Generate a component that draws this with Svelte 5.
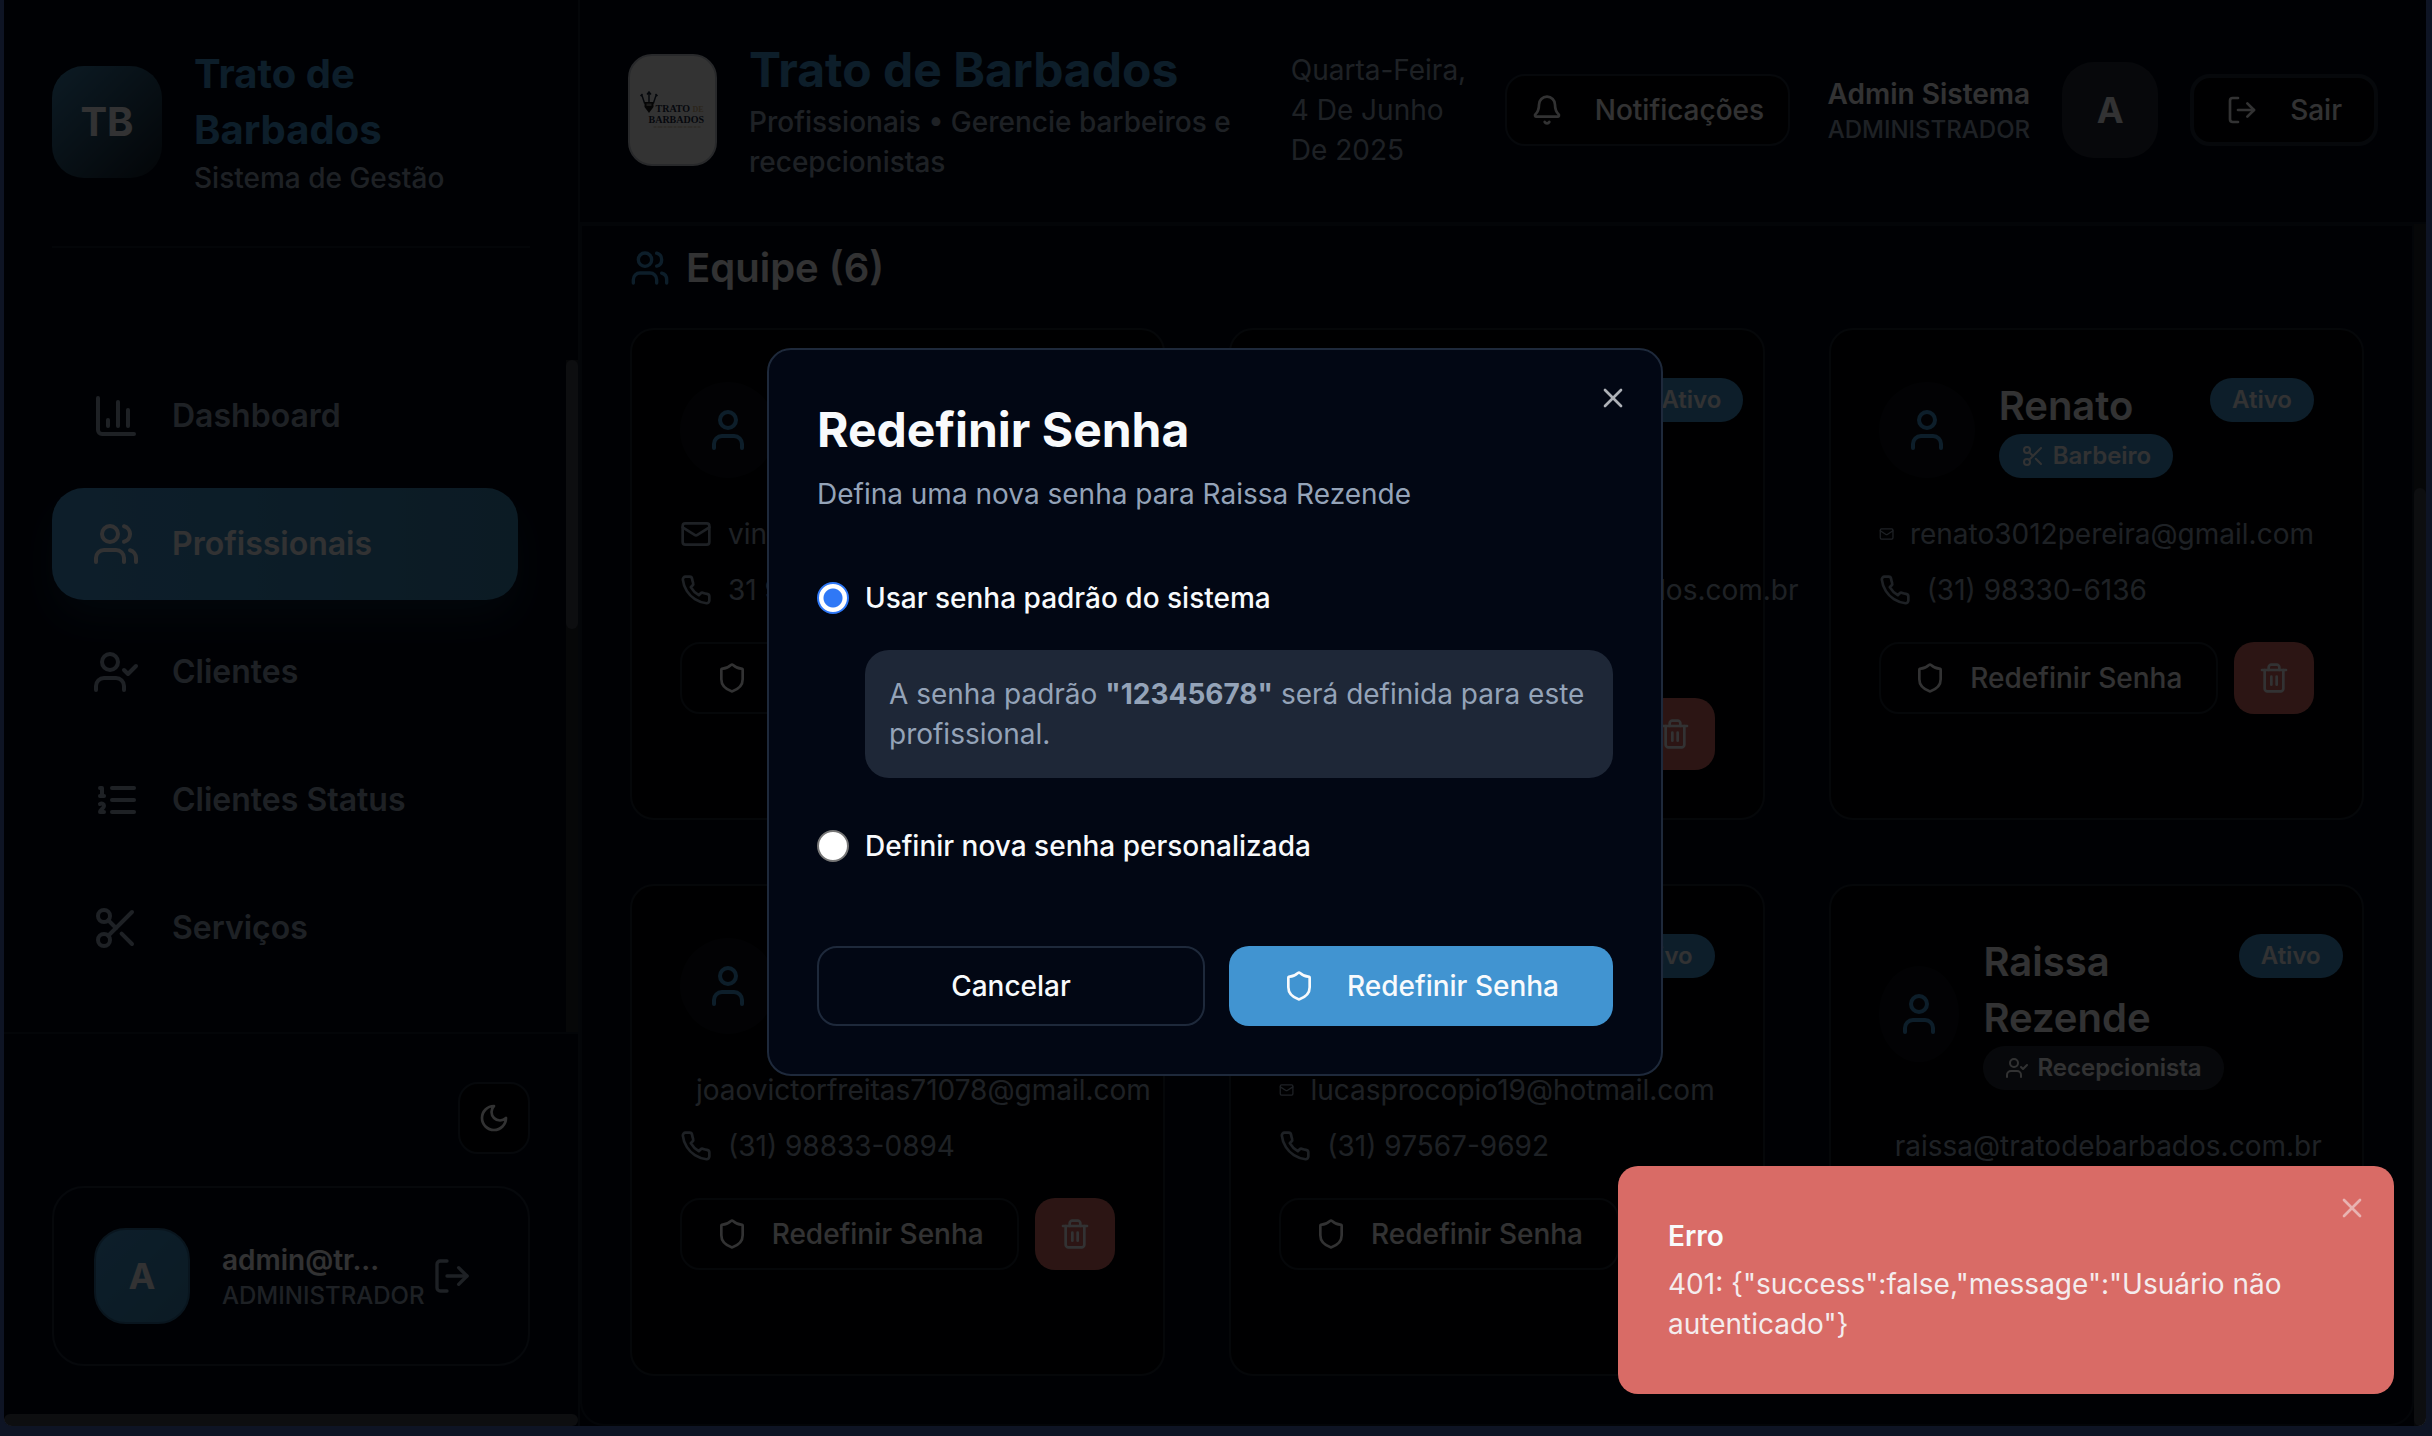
<script>
  const icons = {
    chart: ['M3 3v16a2 2 0 0 0 2 2h16', 'M18 17V9', 'M13 17V5', 'M8 17v-3'],
    users: ['M16 21v-2a4 4 0 0 0-4-4H6a4 4 0 0 0-4 4v2', 'M13 7a4 4 0 1 1-8 0a4 4 0 0 1 8 0', 'M22 21v-2a4 4 0 0 0-3-3.87', 'M16 3.13a4 4 0 0 1 0 7.75'],
    userCheck: ['M16 21v-2a4 4 0 0 0-4-4H6a4 4 0 0 0-4 4v2', 'M13 7a4 4 0 1 1-8 0a4 4 0 0 1 8 0', 'm16 11 2 2 4-4'],
    list: ['M10 12h11', 'M10 18h11', 'M10 6h11', 'M4 10h2', 'M4 6h1v4', 'M6 18H4c0-1 2-2 2-3s-1-1.5-2-1'],
    scissors: ['M9 6a3 3 0 1 1-6 0a3 3 0 0 1 6 0', 'M8.12 8.12 12 12', 'M20 4 8.12 15.88', 'M9 18a3 3 0 1 1-6 0a3 3 0 0 1 6 0', 'M14.8 14.8 20 20'],
    moon: ['M12 3a6 6 0 0 0 9 9 9 9 0 1 1-9-9Z'],
    logout: ['M9 21H5a2 2 0 0 1-2-2V5a2 2 0 0 1 2-2h4', 'm16 17 5-5-5-5', 'M21 12H9'],
    bell: ['M10.268 21a2 2 0 0 0 3.464 0', 'M3.262 15.326A1 1 0 0 0 4 17h16a1 1 0 0 0 .74-1.673C19.41 13.956 18 12.499 18 8A6 6 0 0 0 6 8c0 4.499-1.411 5.956-2.738 7.326'],
    user: ['M19 21v-2a4 4 0 0 0-4-4H9a4 4 0 0 0-4 4v2', 'M16 7a4 4 0 1 1-8 0a4 4 0 0 1 8 0'],
    mail: ['M4 4h16a2 2 0 0 1 2 2v12a2 2 0 0 1-2 2H4a2 2 0 0 1-2-2V6a2 2 0 0 1 2-2z', 'm22 7-8.97 5.7a1.94 1.94 0 0 1-2.06 0L2 7'],
    phone: ['M22 16.92v3a2 2 0 0 1-2.18 2 19.79 19.79 0 0 1-8.63-3.07 19.5 19.5 0 0 1-6-6 19.79 19.79 0 0 1-3.07-8.67A2 2 0 0 1 4.11 2h3a2 2 0 0 1 2 1.72 12.84 12.84 0 0 0 .7 2.81 2 2 0 0 1-.45 2.11L8.09 9.91a16 16 0 0 0 6 6l1.27-1.27a2 2 0 0 1 2.11-.45 12.84 12.84 0 0 0 2.81.7A2 2 0 0 1 22 16.92z'],
    shield: ['M20 13c0 5-3.5 7.5-7.66 8.95a1 1 0 0 1-.67-.01C7.5 20.5 4 18 4 13V6a1 1 0 0 1 1-1c2 0 4.5-1.2 6.24-2.72a1.17 1.17 0 0 1 1.52 0C14.51 3.81 17 5 19 5a1 1 0 0 1 1 1z'],
    trash: ['M3 6h18', 'M19 6v14c0 1-1 2-2 2H7c-1 0-2-1-2-2V6', 'M8 6V4c0-1 1-2 2-2h4c1 0 2 1 2 2v2', 'M10 11v6', 'M14 11v6'],
    close: ['M18 6 6 18', 'm6 6 12 12']
  };

  const nav = [
    { label: 'Dashboard', icon: 'chart' },
    { label: 'Profissionais', icon: 'users', active: true },
    { label: 'Clientes', icon: 'userCheck' },
    { label: 'Clientes Status', icon: 'list' },
    { label: 'Serviços', icon: 'scissors' }
  ];

  const team = [
    { name: 'Vinicius', role: 'Barbeiro', email: 'vinicius@gmail.com', phone: '31 99999-0000' },
    { name: 'Carlos Henrique', role: 'Recepcionista', email: 'carlos.pires@tratodebarbados.com.br', phone: '(31) 99999-0000' },
    { name: 'Renato', role: 'Barbeiro', email: 'renato3012pereira@gmail.com', phone: '(31) 98330-6136' },
    { name: 'João', role: 'Barbeiro', email: 'joaovictorfreitas71078@gmail.com', phone: '(31) 98833-0894' },
    { name: 'Lucas', role: 'Barbeiro', email: 'lucasprocopio19@hotmail.com', phone: '(31) 97567-9692' },
    { name: 'Raissa Rezende', role: 'Recepcionista', email: 'raissa@tratodebarbados.com.br', phone: '(31) 99999-0000' }
  ];

  let mode = $state('default');
  let modalOpen = $state(true);
  let toastOpen = $state(true);
</script>

{#snippet icon(name, size)}
  <svg class="icon {size}" viewBox="0 0 24 24" aria-hidden="true">
    {#each icons[name] as d}<path {d} />{/each}
  </svg>
{/snippet}

<div class="frame">
  <div class="app">
    <aside class="sidebar">
      <div class="brand">
        <div class="brand-mark">TB</div>
        <div>
          <p class="brand-name">Trato de Barbados</p>
          <p class="brand-sub">Sistema de Gestão</p>
        </div>
      </div>

      <div class="nav-area">
        <nav>
          {#each nav as item}
            <a href="#{item.icon}" class="nav-item" class:active={item.active}>
              {@render icon(item.icon, 'xl')}<span>{item.label}</span>
            </a>
          {/each}
        </nav>
        <div class="track"><div class="thumb nav-thumb"></div></div>
      </div>

      <div class="side-foot">
        <button class="theme" aria-label="Alternar tema">{@render icon('moon', 'md')}</button>
        <div class="account">
          <div class="avatar blue">A</div>
          <div class="account-text">
            <p class="strong">admin@tr...</p>
            <p class="role">ADMINISTRADOR</p>
          </div>
          <button class="ghost" aria-label="Sair da conta">{@render icon('logout', 'lg')}</button>
        </div>
      </div>
      <div class="side-scroll"></div>
    </aside>

    <div class="content">
      <header class="topbar">
        <div class="logo">
          <svg viewBox="0 0 84 108" role="img" aria-label="Trato de Barbados">
            <path d="M11 38l3 9h9l3-9M18.500 36v11M10 40l2-2M27 40l-2-2M16.500 38.500l2-2.500 2 2.500" fill="none" stroke="#1c2a3c" stroke-width="1.500" />
            <path d="M14 46h9v5l-4.500 6-4.500-6z" fill="#1c1c1c" />
            <path d="M16 47.500h5v2.500h-5z" fill="#8a8a88" />
            <text x="25" y="56" class="logo-text">TRATO</text>
            <text x="62" y="56" class="logo-text gold">DE</text>
            <text x="18" y="67" class="logo-text">BARBADOS</text>
            <path d="M23 71h47" stroke="#c9b48c" stroke-width="1.500" stroke-dasharray="3 1 5 1" opacity="0.600" />
          </svg>
        </div>
        <div class="headline">
          <h1>Trato de Barbados</h1>
          <p>Profissionais • Gerencie barbeiros e recepcionistas</p>
        </div>
        <p class="date">Quarta-Feira, 4 De Junho De 2025</p>
        <button class="btn notify">{@render icon('bell', 'md')}Notificações</button>
        <div class="who">
          <p class="strong">Admin Sistema</p>
          <p class="role">ADMINISTRADOR</p>
        </div>
        <div class="avatar">A</div>
        <button class="btn leave">{@render icon('logout', 'md')}Sair</button>
      </header>

      <div class="main-area">
        <main>
          <h2>{@render icon('users', 'lg')}Equipe (6)</h2>
          <div class="grid">
            {#each team as p}
              <article class="card">
                <div class="card-top">
                  <div class="person">
                    <div class="face">{@render icon('user', 'xl')}</div>
                    <div class="person-text">
                      <h3>{p.name}</h3>
                      <span class="badge" class:muted={p.role !== 'Barbeiro'}>
                        {@render icon(p.role === 'Barbeiro' ? 'scissors' : 'userCheck', 'sm')}{p.role}
                      </span>
                    </div>
                  </div>
                  <span class="badge">Ativo</span>
                </div>
                <div class="contacts">
                  <p>{@render icon('mail', 'md')}<span>{p.email}</span></p>
                  <p>{@render icon('phone', 'md')}<span>{p.phone}</span></p>
                </div>
                <div class="actions">
                  <button class="btn reset">{@render icon('shield', 'md')}Redefinir Senha</button>
                  <button class="btn delete" aria-label="Excluir {p.name}">{@render icon('trash', 'md')}</button>
                </div>
              </article>
            {/each}
          </div>
        </main>
        <div class="track"><div class="thumb main-thumb"></div></div>
      </div>
    </div>

    {#if modalOpen}
      <div class="overlay">
        <form class="modal" role="dialog" aria-labelledby="modal-title" onsubmit={(e) => e.preventDefault()}>
          <h2 id="modal-title">Redefinir Senha</h2>
          <p class="desc">Defina uma nova senha para Raissa Rezende</p>
          <label class="choice first">
            <input type="radio" name="mode" value="default" bind:group={mode} />
            Usar senha padrão do sistema
          </label>
          {#if mode === 'default'}
            <p class="note">A senha padrão <strong>"12345678"</strong> será definida para este profissional.</p>
          {/if}
          <label class="choice second">
            <input type="radio" name="mode" value="custom" bind:group={mode} />
            Definir nova senha personalizada
          </label>
          <div class="modal-actions">
            <button type="button" class="btn cancel" onclick={() => (modalOpen = false)}>Cancelar</button>
            <button type="submit" class="btn primary">{@render icon('shield', 'md')}Redefinir Senha</button>
          </div>
          <button type="button" class="close" aria-label="Fechar" onclick={() => (modalOpen = false)}>{@render icon('close', 'md')}</button>
        </form>
      </div>
    {/if}

    {#if toastOpen}
      <div class="toast" role="alert">
        <p class="toast-title">Erro</p>
        <p class="toast-body">401: &#123;"success":false,"message":"Usuário não autenticado"&#125;</p>
        <button class="toast-close" aria-label="Fechar aviso" onclick={() => (toastOpen = false)}>{@render icon('close', 'md')}</button>
      </div>
    {/if}
  </div>
</div>

<style>
  :global(body) { background: #0e1424; }
  :global(*), :global(*::before) { box-sizing: border-box; }
  .frame {
    --bg: #020817;
    --line: #1e293b;
    --soft: #161f2e;
    --muted: #94a3b8;
    --fg: #f8fafc;
    --blue: #4196d2;
    --red: #d96b66;
    height: 100vh;
    padding: 0 6px 10px 4px;
    font-family: Inter, sans-serif;
    font-size: 28px;
    line-height: 40px;
    color: var(--fg);
  }
  p, h1, h2, h3 { margin: 0; }
  button { font: inherit; color: inherit; background: none; border: 0; padding: 0; cursor: pointer; }
  .app { position: relative; display: flex; height: 100%; overflow: hidden; background: var(--bg); border-radius: 0 0 8px 8px; }

  .icon { fill: none; stroke: currentColor; stroke-width: 2; stroke-linecap: round; stroke-linejoin: round; flex: none; display: block; }
  .sm { width: 24px; height: 24px; }
  .md { width: 32px; height: 32px; }
  .lg { width: 40px; height: 40px; }
  .xl { width: 48px; height: 48px; }

  .sidebar { width: 576px; flex: none; display: flex; flex-direction: column; border-right: 2px solid var(--soft); }
  .brand { display: flex; align-items: center; gap: 32px; margin: 0 48px 112px; padding: 46px 0 48px; border-bottom: 2px solid #131c2b; }
  .brand-mark { width: 110px; height: 112px; flex: none; display: grid; place-items: center; border-radius: 32px; background: linear-gradient(135deg, #3f87b4, #101c28); font-size: 40px; font-weight: 700; }
  .brand-name { font-size: 40px; line-height: 56px; font-weight: 700; color: var(--blue); }
  .brand-sub { color: var(--muted); font-weight: 500; }

  .nav-area { flex: 1; min-height: 0; display: flex; overflow: hidden; }
  nav { flex: 1; display: flex; flex-direction: column; gap: 16px; padding: 0 48px; }
  .nav-item { flex: none; height: 112px; display: flex; align-items: center; gap: 32px; padding: 0 40px; border-radius: 32px; color: var(--muted); text-decoration: none; font-size: 32px; font-weight: 600; }
  .nav-item.active { color: var(--fg); background: linear-gradient(90deg, #4196d2, #3b86b4); box-shadow: 0 20px 40px -6px rgba(65, 150, 210, 0.2); }
  .track { width: 12px; flex: none; background: #1e232b; }
  .thumb { background: #41454f; border-radius: 6px; }
  .nav-thumb { height: 40%; }

  .side-foot { display: flex; flex-direction: column; align-items: flex-end; gap: 32px; padding: 48px; border-top: 2px solid #131c2b; }
  .theme { width: 72px; height: 72px; display: grid; place-items: center; border: 2px solid var(--line); border-radius: 20px; background: #030305; }
  .account { align-self: stretch; display: flex; align-items: center; gap: 32px; padding: 40px; border: 2px solid var(--line); border-radius: 32px; }
  .account-text { flex: 1; min-width: 0; white-space: nowrap; }
  .strong { font-weight: 600; }
  .role { font-size: 24px; line-height: 32px; font-weight: 500; color: var(--muted); }
  .ghost { padding: 16px; color: var(--muted); }
  .avatar { width: 96px; height: 96px; flex: none; display: grid; place-items: center; border-radius: 32px; background: #262c38; font-size: 36px; font-weight: 700; }
  .avatar.blue { background: linear-gradient(135deg, #4196d2, #3b86b4); border: 2px solid #2f6c98; }
  .side-scroll { height: 12px; flex: none; background: #41454f; border-radius: 6px; }

  .content { flex: 1; min-width: 0; display: flex; flex-direction: column; }
  .topbar { display: flex; align-items: center; gap: 32px; padding: 38px 48px 40px; border-bottom: 2px solid #131c2b; }
  .logo { width: 89px; height: 112px; flex: none; border: 2px solid #c8ccd4; border-radius: 24px; background: #fff; overflow: hidden; }
  .logo svg { display: block; width: 100%; height: 100%; }
  .logo-text { font-family: "Liberation Serif", serif; font-size: 10px; font-weight: 700; fill: #1c2c45; }
  .logo-text.gold { font-size: 8px; fill: #d8b98a; }
  .headline { flex: 1; min-width: 0; color: var(--muted); font-weight: 500; }
  h1 { font-size: 48px; line-height: 64px; font-weight: 700; color: var(--blue); }
  .date { width: 182px; flex: none; color: var(--muted); }
  .btn { display: flex; align-items: center; justify-content: center; gap: 32px; height: 72px; font-weight: 500; border-radius: 20px; white-space: nowrap; }
  .notify { padding: 0 24px; border: 2px solid var(--line); background: #030305; }
  .leave { padding: 0 32px; border: 4px solid var(--line); background: #030305; }
  .who { min-width: 208px; text-align: right; white-space: nowrap; }

  .main-area { flex: 1; min-height: 0; display: flex; }
  main { flex: 1; min-width: 0; padding: 14px 48px 48px; border: 2px solid #131c2b; border-radius: 0 0 24px 24px; overflow: hidden; }
  main h2 { display: flex; align-items: center; gap: 16px; margin-bottom: 32px; font-size: 40px; line-height: 56px; font-weight: 600; }
  main h2 :global(svg) { color: var(--blue); }
  .main-area .track { display: flex; flex-direction: column; justify-content: flex-end; }
  .main-thumb { height: 78%; }

  .grid { display: grid; grid-template-columns: repeat(3, minmax(0, 1fr)); gap: 64px; }
  .card { padding: 48px; border: 2px solid #1b2330; border-radius: 24px; background: #030305; }
  .card-top { display: flex; align-items: flex-start; justify-content: space-between; margin-bottom: 32px; }
  .person { display: flex; align-items: center; gap: 24px; min-width: min-content; }
  .face { width: 96px; height: 96px; min-width: 80px; display: grid; place-items: center; border-radius: 50%; background: #0b0e17; color: var(--blue); }
  .person-text { padding-bottom: 4px; min-width: min-content; }
  h3 { font-size: 40px; line-height: 56px; font-weight: 600; }
  .badge { display: flex; align-items: center; gap: 8px; width: max-content; height: 44px; flex: none; padding: 0 22px; border-radius: 22px; background: var(--blue); font-size: 24px; line-height: 32px; font-weight: 600; }
  .badge.muted { background: #262c38; }
  .contacts { display: flex; flex-direction: column; gap: 16px; margin-bottom: 32px; color: var(--muted); }
  .contacts p { display: flex; align-items: center; gap: 16px; white-space: nowrap; }
  .contacts :global(svg) { flex: 0 1 32px; min-width: 0; }
  .contacts span { flex: none; }
  .actions { display: flex; gap: 16px; }
  .reset { flex: 1; gap: 24px; border: 2px solid #1b2330; }
  .delete { width: 80px; background: var(--red); }

  .overlay { position: absolute; inset: 0; display: grid; place-items: center; padding-bottom: 2px; background: rgba(0, 0, 0, 0.8); }
  .modal { position: relative; width: 896px; padding: 48px; border: 2px solid var(--line); border-radius: 24px; background: #020714; }
  .modal h2 { font-size: 48px; line-height: 64px; font-weight: 700; margin-bottom: 12px; }
  .desc { color: var(--muted); margin-bottom: 64px; }
  .choice { display: flex; align-items: center; gap: 16px; font-weight: 500; }
  .choice.second { margin: 48px 0 80px; }
  input { appearance: none; width: 32px; height: 32px; margin: 0; border: 2px solid #767676; border-radius: 50%; background: #fff; }
  input:checked { border-color: #2f78f6; background: radial-gradient(circle, #2f78f6 9px, #fff 10px); }
  .note { margin: 32px 0 0 48px; padding: 24px; border-radius: 24px; background: #1e2737; color: var(--muted); }
  strong { font-weight: 700; }
  .modal-actions { display: flex; gap: 24px; }
  .modal-actions .btn { height: 80px; flex: 1; }
  .cancel { border: 2px solid var(--line); }
  .primary { background: #4194d1; }
  .close { position: absolute; top: 32px; right: 32px; opacity: 0.7; }

  .toast { position: absolute; right: 32px; bottom: 32px; width: 776px; padding: 50px; border-radius: 20px; background: #d96b66; }
  .toast-title { font-weight: 600; margin-bottom: 8px; }
  .toast-body { opacity: 0.9; }
  .toast-close { position: absolute; top: 26px; right: 26px; opacity: 0.5; }
</style>
